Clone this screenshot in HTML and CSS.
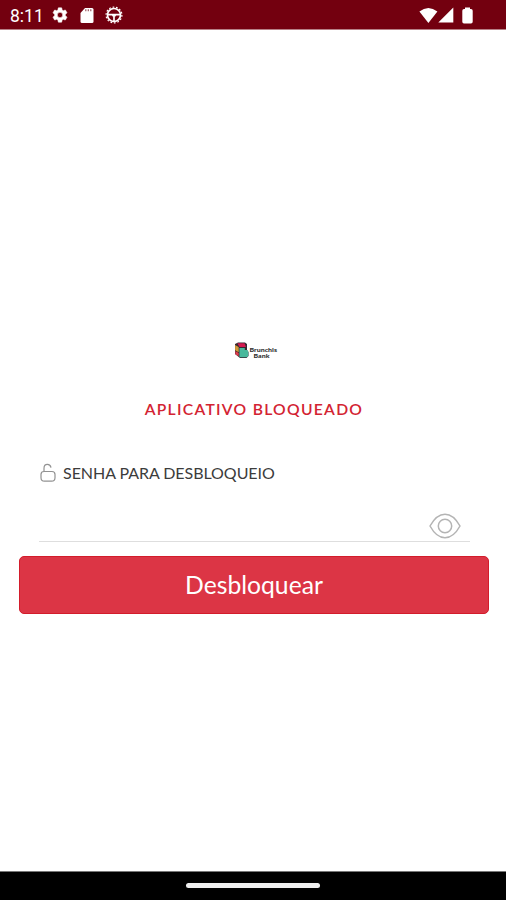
FILE: index.html
```html
<!DOCTYPE html>
<html lang="pt-BR">
<head>
<meta charset="utf-8">
<title>Aplicativo bloqueado</title>
<link rel="stylesheet" href="styles.css">
</head>
<body>
<header class="status">
  <span class="time">8:11</span>
  <svg class="gear" width="18" height="18" viewBox="0 0 24 24"><path fill="#fff" stroke="#fff" stroke-width=".7" d="M19.14 12.94c.04-.3.06-.61.06-.94 0-.32-.02-.64-.07-.94l2.03-1.58a.49.49 0 0 0 .12-.61l-1.92-3.32a.49.49 0 0 0-.59-.22l-2.39.96c-.5-.38-1.03-.7-1.62-.94l-.36-2.54a.48.48 0 0 0-.48-.41h-3.84c-.24 0-.43.17-.47.41l-.36 2.54c-.59.24-1.13.57-1.62.94l-2.39-.96c-.22-.08-.47 0-.59.22L2.74 8.87c-.12.21-.08.47.12.61l2.03 1.58c-.05.3-.09.63-.09.94s.02.64.07.94l-2.03 1.58a.49.49 0 0 0-.12.61l1.92 3.32c.12.22.37.29.59.22l2.39-.96c.5.38 1.03.7 1.62.94l.36 2.54c.05.24.24.41.48.41h3.84c.24 0 .44-.17.47-.41l.36-2.54c.59-.24 1.13-.56 1.62-.94l2.39.96c.22.08.47 0 .59-.22l1.92-3.32a.49.49 0 0 0-.12-.61zM12 15.6A3.6 3.6 0 1 1 12 8.400a3.600 3.600 0 0 1 0 7.200z"/></svg>
  <svg class="card" width="14" height="17" viewBox="0 0 14 17"><path fill="#fff" d="M5 1h7q1.500 0 1.500 1.500v12q0 1.500-1.500 1.500H2q-1.500 0-1.500-1.500V6z"/><path d="M5.800 2.300v2M8.300 2.300v2M10.800 2.300v2" stroke="#9b5960" stroke-width="1.200"/></svg>
  <svg class="wheel" width="18" height="18" viewBox="0 0 18 18" fill="none" stroke="#fff"><circle cx="9" cy="9" r="7.900" stroke-width="1.200" stroke-dasharray="1.800 1.745"/><circle cx="9" cy="9" r="6.500" stroke-width="1.700"/><path d="M3 8.700h12M9 9v6" stroke-width="1.700"/><path d="M6.500 8h5l-1 2.600h-3z" fill="#fff" stroke="none"/></svg>
  <span class="signals">
    <svg width="19" height="17" viewBox="0 0 19 17"><path fill="#fff" d="M.4 4.500Q9.300-2.500 18.400 4.500L9.400 16z"/></svg>
    <svg width="16" height="16" viewBox="0 0 16 16"><path fill="#fff" d="M15.300.5v15H.3z"/></svg>
    <svg class="battery" width="11" height="17" viewBox="0 0 11 17"><path fill="#fff" d="M3 .5h5V2h1q1.700 0 1.700 1.700v11q0 1.800-1.700 1.800H2Q.3 16.500.3 14.700v-11Q.3 2 2 2h1z"/></svg>
  </span>
</header>
<main class="lock">
  <svg class="logo" width="46" height="20" viewBox="0 0 46 20">
    <path d="M2 3l3-1.500h7l2 1.500v6l1.500 2v4l-2 2H7L2 13z" fill="#352a32"/>
    <path d="M4.300 2.200h7.200l1.500 3.800H6.500z" fill="#d31a50"/>
    <path d="M2.100 4l3.600 2v5.200l-3.600-2z" fill="#d49a38"/>
    <path d="M2.300 10l3.400 2v3.200l-3.400-2z" fill="#e03c4e"/>
    <path d="M6.400 7h5.400v2h1.800q1.700 0 1.700 2v3q0 2.200-2 2.200H6.400z" fill="#48b99c"/>
    <text x="16.500" y="10.800" textLength="27.500" lengthAdjust="spacingAndGlyphs">Brunchis</text>
    <text x="20.500" y="17" textLength="16" lengthAdjust="spacingAndGlyphs">Bank</text>
  </svg>
  <h1>APLICATIVO BLOQUEADO</h1>
  <section class="field">
    <label class="label" for="senha">
      <svg width="17" height="20" viewBox="0 0 17 20" fill="none" stroke="#929292" stroke-width="1.200"><path d="M5 8.500V5.200Q5 1.400 8.400 1.400q3 0 3.600 3.200"/><path d="M5 8.500h8q3 0 3 3v3.200q0 3.500-3.500 3.500h-7Q2 18.200 2 14.700v-3.200q0-3 3-3z"/></svg>
      <span>SENHA PARA DESBLOQUEIO</span>
    </label>
    <div class="entry">
      <input id="senha" type="password">
      <svg width="32" height="26" viewBox="0 0 32 26" fill="none" stroke="#b4b4b4" stroke-width="1.500"><path d="M1 13Q7.500 1.200 16 1.200T31 13Q24.500 24.800 16 24.800T1 13z"/><circle cx="16" cy="13" r="6.700"/></svg>
    </div>
  </section>
  <button class="unlock">Desbloquear</button>
</main>
<footer class="nav"><span class="handle"></span></footer>
</body>
</html>
```
FILE: styles.css
```css
* { box-sizing: border-box; }
body {
  margin: 0;
  height: 900px;
  display: flex;
  flex-direction: column;
  background: #fff;
  font-family: Lato, sans-serif;
}
svg { display: block; flex: none; }
.status {
  height: 30px;
  padding: 1px 33px 0 10px;
  display: flex;
  align-items: center;
  background: #73000f;
  border-bottom: 1px solid #b78086;
  color: #fff;
}
.time {
  width: 41px;
  padding-top: 2px;
  font: 400 17.5px/20px Roboto, sans-serif;
}
.card { margin-left: 11px; }
.wheel { margin-left: 11px; }
.signals {
  display: flex;
  align-items: center;
  margin-left: auto;
}
.battery { margin-left: 8px; }
.lock {
  flex: 1;
  display: flex;
  flex-direction: column;
  padding: 311px 17px 0 19px;
}
.logo { margin-left: 214px; }
.logo text {
  font: 900 5.7px Lato, sans-serif;
  fill: #303030;
}
h1 {
  margin: 38px 0 0;
  font-size: 15.7px;
  line-height: 20px;
  font-weight: 600;
  letter-spacing: 1.28px;
  text-align: center;
  color: #d32332;
}
.field { margin: 44px 19px 0 20px; }
.label {
  display: flex;
  align-items: center;
  gap: 7px;
  height: 20px;
  font-size: 16px;
  letter-spacing: -0.05px;
  color: #3c3c3c;
}
.label span { padding-bottom: 2px; }
.entry {
  height: 59px;
  padding: 0 9px 2px 0;
  display: flex;
  align-items: flex-end;
  border-bottom: 1px solid #dedede;
}
.entry input {
  flex: 1;
  min-width: 0;
  height: 26px;
  border: 0;
  padding: 0;
  outline: 0;
  background: none;
}
.unlock {
  height: 58px;
  margin: 14px 0 0;
  padding: 0;
  border: 1px solid #d31c2b;
  border-radius: 5px;
  background: #dc3545;
  color: #fff;
  font: 400 24.7px/30px Lato, sans-serif;
}
.nav {
  height: 29px;
  display: flex;
  justify-content: center;
  align-items: center;
  padding-bottom: 2px;
  background: #000;
  border-top: 1px solid #777;
}
.handle {
  width: 134px;
  height: 5px;
  border-radius: 3px;
  background: #eee;
}
```
